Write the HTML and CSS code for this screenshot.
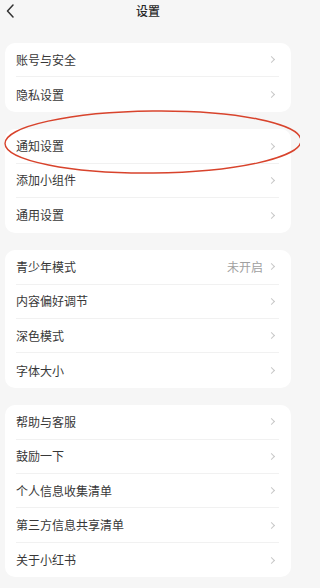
FILE: index.html
```html
<!DOCTYPE html>
<html lang="zh-CN">
<head>
<meta charset="utf-8">
<title>设置</title>
<link rel="stylesheet" href="styles.css">
</head>
<body>
<div class="page">
  <header class="topbar">
    <svg class="back" viewBox="0 0 10 16" width="10" height="16"><polyline points="7,1 1.5,7 7,13" fill="none" stroke="#333" stroke-width="1.5" stroke-linecap="round" stroke-linejoin="round"/></svg>
    <h1 class="title">设置</h1>
  </header>

  <section class="card">
    <div class="row"><span class="label">账号与安全</span><span class="chev"></span></div>
    <div class="row"><span class="label">隐私设置</span><span class="chev"></span></div>
  </section>

  <section class="card">
    <div class="row"><span class="label">通知设置</span><span class="chev"></span></div>
    <div class="row"><span class="label">添加小组件</span><span class="chev"></span></div>
    <div class="row"><span class="label">通用设置</span><span class="chev"></span></div>
  </section>

  <section class="card">
    <div class="row"><span class="label">青少年模式</span><span class="right"><span class="value">未开启</span><span class="chev"></span></span></div>
    <div class="row"><span class="label">内容偏好调节</span><span class="chev"></span></div>
    <div class="row"><span class="label">深色模式</span><span class="chev"></span></div>
    <div class="row"><span class="label">字体大小</span><span class="chev"></span></div>
  </section>

  <section class="card">
    <div class="row"><span class="label">帮助与客服</span><span class="chev"></span></div>
    <div class="row"><span class="label">鼓励一下</span><span class="chev"></span></div>
    <div class="row"><span class="label">个人信息收集清单</span><span class="chev"></span></div>
    <div class="row"><span class="label">第三方信息共享清单</span><span class="chev"></span></div>
    <div class="row"><span class="label">关于小红书</span><span class="chev"></span></div>
  </section>

  <svg class="mark" viewBox="0 0 300 588" width="300" height="588">
    <ellipse cx="153" cy="142" rx="148" ry="31" fill="none" stroke="#d8432c" stroke-width="1.4" transform="rotate(-0.6 153 142)"/>
  </svg>
</div>
</body>
</html>
```

FILE: styles.css
```css
* { box-sizing: border-box; }
html, body {
  margin: 0;
  padding: 0;
  background: #f6f6f6;
}
body {
  font-family: "Noto Sans CJK SC", "Noto Sans", sans-serif;
  color: #333;
}
.page {
  position: relative;
  width: 300px;
  height: 588px;
  overflow: hidden;
  padding: 0 9px 0 5px;
}
.topbar {
  position: relative;
  height: 22px;
  margin-bottom: 21px;
  display: flex;
  align-items: center;
  justify-content: center;
}
.back {
  position: absolute;
  left: 1px;
  top: 4px;
}
.title {
  margin: 0;
  font-size: 12px;
  line-height: 22px;
  font-weight: 500;
  color: #2a2a2a;
}
.card {
  background: #fff;
  border-radius: 10px;
  padding: 0 12px 0 11px;
  margin-bottom: 17.6px;
}
.row {
  height: 34.4px;
  display: flex;
  align-items: center;
  justify-content: space-between;
  border-bottom: 1px solid #f1f1f1;
}
.row:last-child { border-bottom: none; }
.label {
  font-size: 12px;
  line-height: 1;
  color: #383838;
}
.right {
  display: flex;
  align-items: center;
}
.value {
  font-size: 12px;
  color: #a0a0a0;
  margin-right: 6px;
  line-height: 1;
}
.chev {
  width: 5px;
  height: 5px;
  border-top: 1px solid #c8c8c8;
  border-right: 1px solid #c8c8c8;
  transform: rotate(45deg);
  margin-right: 5px;
}
.mark {
  position: absolute;
  top: 0;
  left: 0;
  pointer-events: none;
}
```
